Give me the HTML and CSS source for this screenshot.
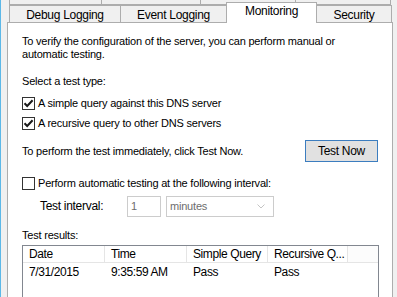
FILE: index.html
```html
<!DOCTYPE html>
<html lang="en">
<head>
  <meta charset="UTF-8">
  <title>DNS Server Properties - Monitoring</title>
  <link rel="stylesheet" href="styles.css">
</head>
<body>
  <div class="window">
    <!-- back row of tabs, only the bottom edge shows -->
    <div class="tabs tabs-back">
      <div class="tab-back tb-1"></div>
      <div class="tab-back tb-2"></div>
      <div class="tab-back tb-3"></div>
      <div class="tab-back tb-4"></div>
    </div>

    <div class="tabs">
      <div class="tab tab-debug">Debug Logging</div>
      <div class="tab tab-event">Event Logging</div>
      <div class="tab tab-monitor active">Monitoring</div>
      <div class="tab tab-security">Security</div>
    </div>

    <div class="panel">
      <p class="intro">To verify the configuration of the server, you can perform manual or<br>automatic testing.</p>

      <p class="label select-label">Select a test type:</p>

      <label class="check check-first">
        <span class="box">
          <svg width="11" height="11" viewBox="0 0 11 11"><path d="M1.5 5.2 L4.2 8 L9.6 2.2" fill="none" stroke="#1a1a1a" stroke-width="2"/></svg>
        </span>
        <span>A simple query against this DNS server</span>
      </label>
      <label class="check check-second">
        <span class="box">
          <svg width="11" height="11" viewBox="0 0 11 11"><path d="M1.5 5.2 L4.2 8 L9.6 2.2" fill="none" stroke="#1a1a1a" stroke-width="2"/></svg>
        </span>
        <span>A recursive query to other DNS servers</span>
      </label>

      <div class="action-row">
        <span>To perform the test immediately, click Test Now.</span>
        <button class="btn">Test Now</button>
      </div>

      <label class="check check-auto">
        <span class="box"></span>
        <span>Perform automatic testing at the following interval:</span>
      </label>

      <div class="interval-row">
        <span class="interval-label">Test interval:</span>
        <div class="field field-num">1</div>
        <div class="field field-select">
          <span>minutes</span>
          <svg width="8" height="5" viewBox="0 0 8 5"><path d="M0.5 0.5 L4 4 L7.5 0.5" fill="none" stroke="#c4c4c4" stroke-width="1"/></svg>
        </div>
      </div>

      <p class="label results-label">Test results:</p>

      <div class="list">
        <div class="list-head">
          <div class="col col-date">Date</div>
          <div class="col col-time">Time</div>
          <div class="col col-simple">Simple Query</div>
          <div class="col col-rec">Recursive Q...</div>
        </div>
        <div class="list-row">
          <div class="col col-date">7/31/2015</div>
          <div class="col col-time">9:35:59 AM</div>
          <div class="col col-simple">Pass</div>
          <div class="col col-rec">Pass</div>
        </div>
      </div>
    </div>
  </div>
</body>
</html>
```

FILE: styles.css
```css
* {
  box-sizing: border-box;
}

body {
  margin: 0;
  height: 297px;
  overflow: hidden;
  background: #f0f0f0;
  border-left: 1px solid #5cb8e8;
  font-family: "Liberation Sans", Arial, sans-serif;
  font-size: 11px;
  letter-spacing: -0.2px;
  color: #000;
}

.window {
  padding-left: 6px;
}

/* tabs */

.tabs {
  display: flex;
  padding-left: 2px;
}

.tabs-back {
  height: 5px;
}

.tab-back {
  height: 5px;
  border-left: 1px solid #adadad;
  border-bottom: 1px solid #adadad;
}

.tb-1 { width: 92px; }
.tb-2 { width: 99px; }
.tb-3 { width: 95px; }
.tb-4 { width: 96px; border-right: 1px solid #adadad; }

.tab {
  height: 17px;
  border-top: 1px solid #adadad;
  border-left: 1px solid #adadad;
  background: #f0f0f0;
  text-align: center;
  line-height: 16px;
  padding-top: 1px;
  font-size: 12px;
  letter-spacing: -0.3px;
}

.tab-debug { width: 111px; }
.tab-event { width: 106px; }

.tab-monitor {
  width: 91px;
  border-right: 1px solid #adadad;
}

.tab-security {
  width: 75px;
  border-left: none;
  border-right: 1px solid #adadad;
}

.tab.active {
  position: relative;
  z-index: 1;
  height: 21px;
  margin-top: -3px;
  margin-bottom: -1px;
  padding-top: 0;
  background: #fff;
}

/* page body */

.panel {
  width: 386px;
  height: 300px;
  background: #fff;
  border: 1px solid #adadad;
  padding: 12px 14px 0;
  line-height: 13px;
}

.panel p {
  margin: 0;
}

.select-label {
  margin-top: 14px !important;
}

.check {
  display: flex;
  align-items: center;
  height: 13px;
  gap: 3px;
}

.check-first {
  margin-top: 9px;
}

.check-second {
  margin-top: 7px;
}

.box {
  width: 13px;
  height: 13px;
  border: 1px solid #333;
  background: #fff;
  display: flex;
  align-items: center;
  justify-content: center;
}

.action-row {
  display: flex;
  align-items: center;
  justify-content: space-between;
  margin-top: 10px;
  height: 22px;
}

.btn {
  width: 73px;
  height: 22px;
  background: #e1e1e1;
  border: 1px solid #3c7dbf;
  font-family: inherit;
  font-size: 12px;
  letter-spacing: -0.3px;
  color: #000;
  padding: 0;
}

.check-auto {
  margin-top: 15px;
}

.interval-row {
  display: flex;
  align-items: center;
  margin-top: 6px;
  height: 21px;
}

.interval-label {
  width: 105px;
  padding-left: 18px;
  font-size: 12px;
  letter-spacing: -0.3px;
}

.field {
  height: 21px;
  border: 1px solid #cccccc;
  background: #fff;
  color: #6d6d6d;
  font-size: 11px;
  display: flex;
  align-items: center;
  padding-left: 3px;
}

.field-num {
  width: 34px;
}

.field-select {
  width: 108px;
  margin-left: 5px;
  justify-content: space-between;
  padding-right: 8px;
}

.results-label {
  margin-top: 12px !important;
}

.list {
  margin-top: 3px;
  width: 357px;
  height: 80px;
  border: 1px solid #828790;
  background: #fff;
}

.list-head,
.list-row {
  display: flex;
  height: 17px;
}

.list-head {
  border-bottom: 1px solid #e5e5e5;
  background: #fcfcfc;
}

.col {
  padding-left: 6px;
  line-height: 17px;
  font-size: 12px;
  letter-spacing: -0.4px;
  white-space: nowrap;
  overflow: hidden;
}

.list-head .col {
  border-right: 1px solid #e5e5e5;
  background: #fff;
}

.col-date { width: 82px; }
.col-time { width: 82px; }
.col-simple { width: 81px; }
.col-rec { width: 80px; }

.list-row {
  margin-top: 1px;
}
```
